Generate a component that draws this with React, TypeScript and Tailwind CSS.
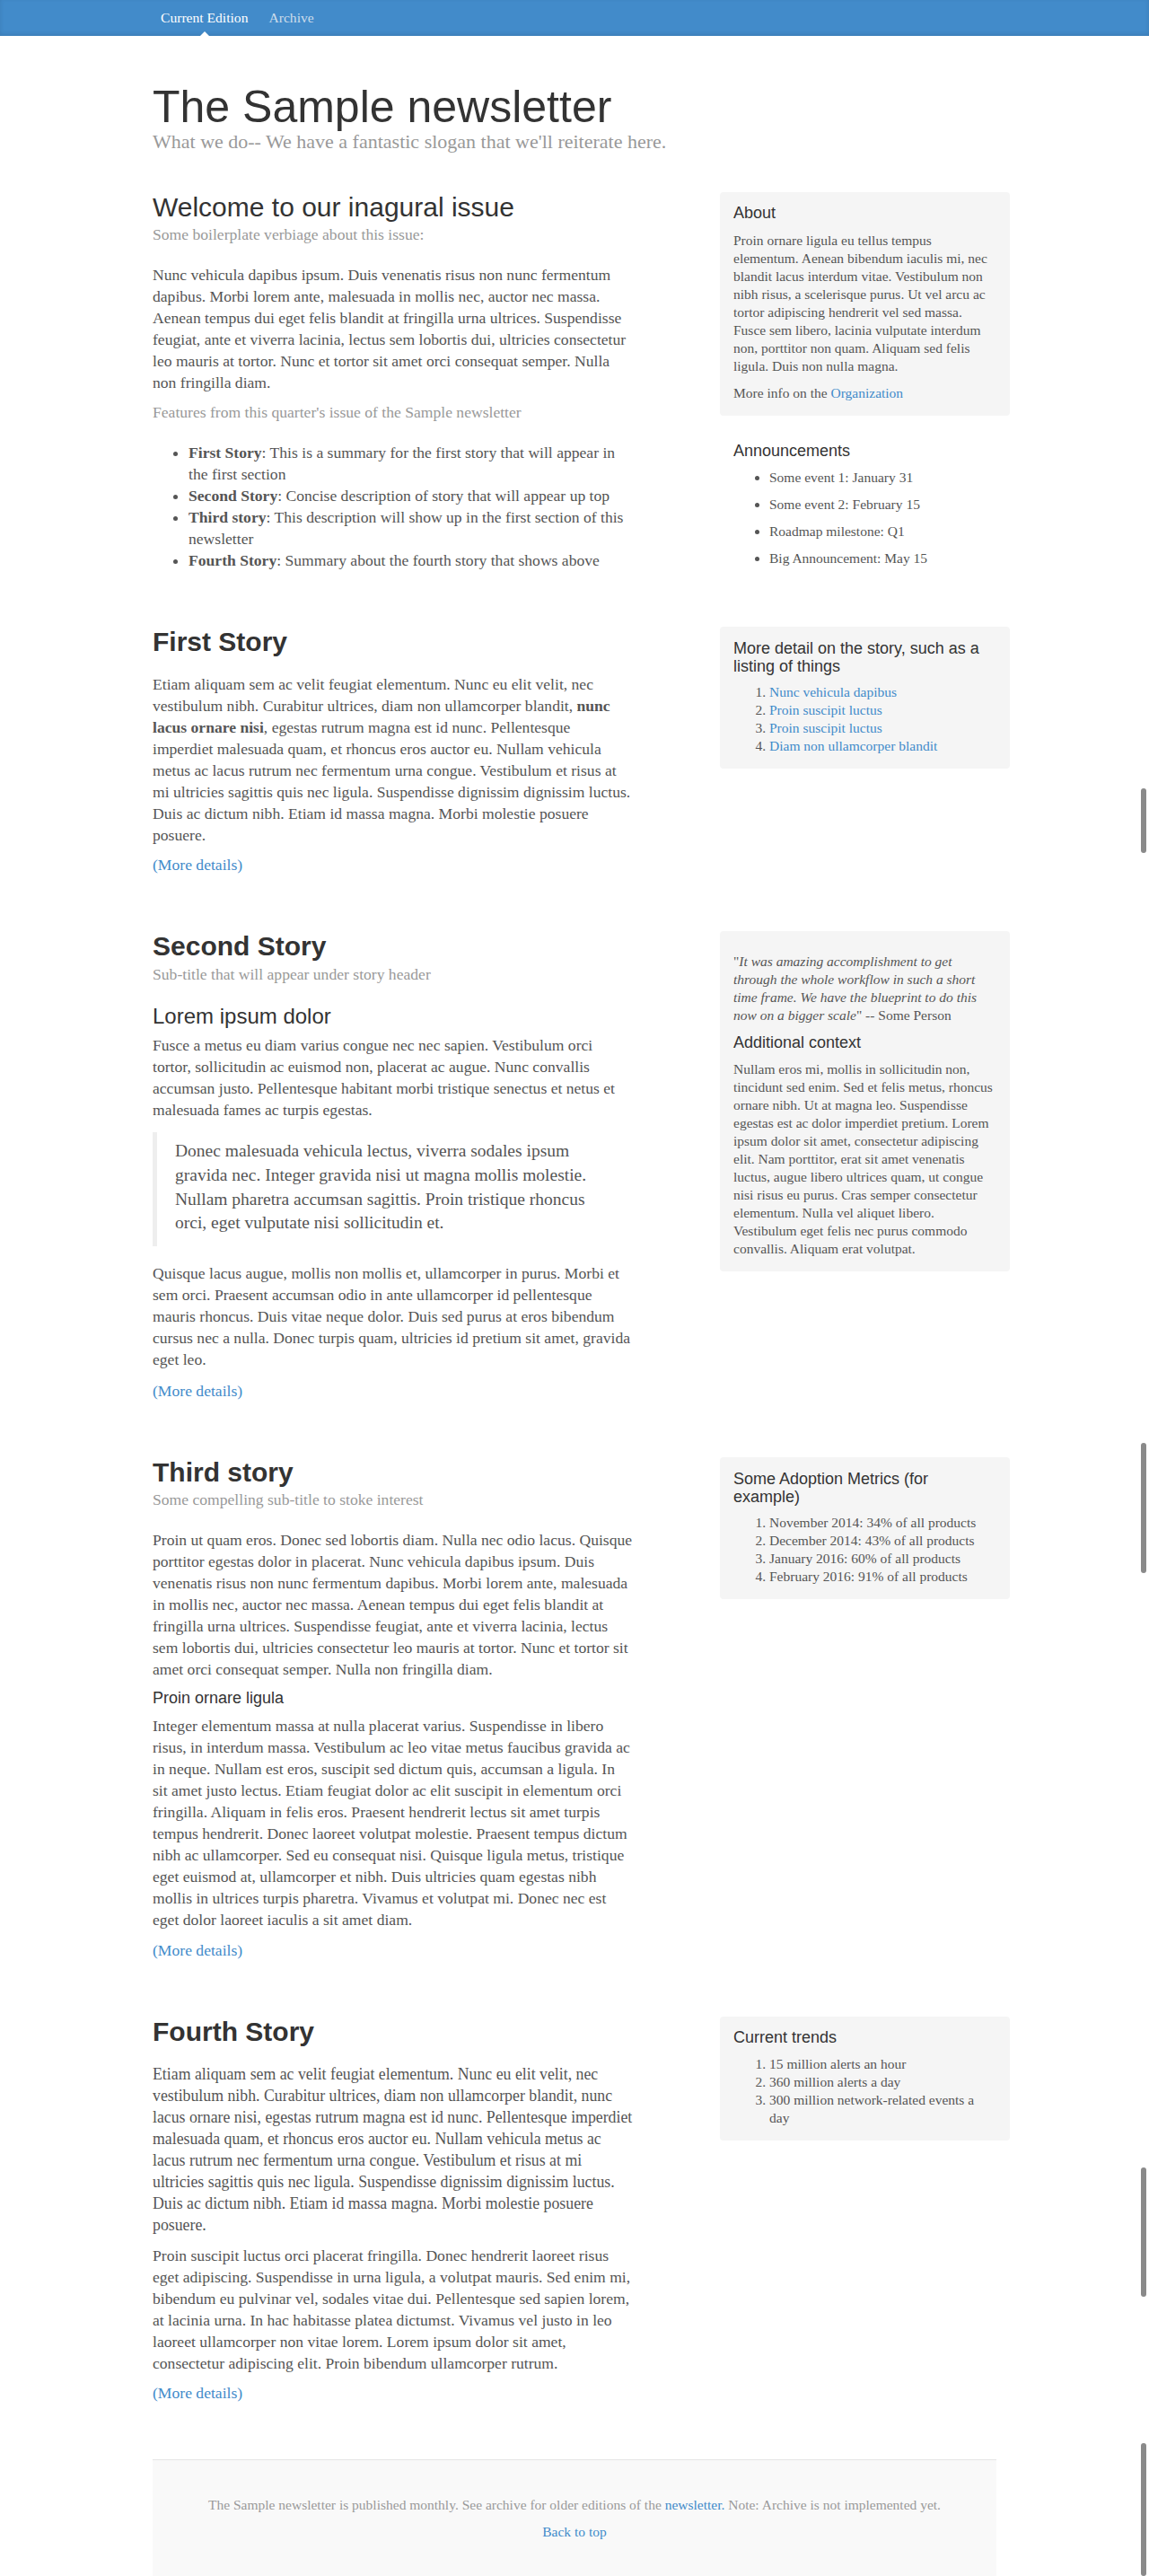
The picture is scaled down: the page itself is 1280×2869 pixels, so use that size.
import React from "react"

const sans = "font-['Liberation_Sans',Arial,sans-serif]"
const link = "text-[#428bca]"

function Row({ main, side, last }: { main: React.ReactNode; side: React.ReactNode; last?: boolean }) {
  return (
    <div className={last ? "flex" : "flex mb-[62px]"}>
      <div className="w-[536px] shrink-0">{main}</div>
      <aside className="ml-auto mr-[-15px] w-[323px] shrink-0">{side}</aside>
    </div>
  )
}

function Inset({ children, className }: { children: React.ReactNode; className?: string }) {
  return <div className={"rounded-[4px] bg-[#f5f5f5] px-[15px] pb-[15px] " + (className ?? "")}>{children}</div>
}

function SideTitle({ children, className }: { children: React.ReactNode; className?: string }) {
  return <h4 className={sans + " text-[18px] leading-[19.8px] text-[#333] " + (className ?? "")}>{children}</h4>
}

function StoryTitle({ children, className }: { children: React.ReactNode; className?: string }) {
  return <h2 className={sans + " text-[30px] leading-[33px] font-bold text-[#333] " + (className ?? "")}>{children}</h2>
}

function More({ className }: { className?: string }) {
  return (
    <p className={"leading-[24px] " + (className ?? "")}>
      <a href="#" className={link}>(More details)</a>
    </p>
  )
}

// scrollbar thumbs caught in the stitched screenshot
const thumbs = ["top-[878px] h-[72px]", "top-[1607px] h-[145px]", "top-[2414px] h-[144px]", "top-[2721px] h-[148px]"]

export default function App() {
  return (
    <div className="relative min-h-screen bg-white font-['Liberation_Serif','Times_New_Roman',serif] text-[#555]">
      {/* masthead */}
      <nav className="h-[40px] bg-[#428bca] shadow-[inset_0_-2px_5px_rgba(0,0,0,0.1)]">
        <div className="flex pl-[169px] text-[15.6px] leading-[20px]">
          <a href="#" className="relative p-[10px] text-white">
            Current Edition
            <span className="absolute bottom-0 left-1/2 ml-[-5px] h-0 w-0 border-x-[5px] border-b-[5px] border-x-transparent border-b-white" />
          </a>
          <a href="#" className="ml-[3px] p-[10px] text-[#cdddeb]">Archive</a>
        </div>
      </nav>

      <div className="mx-auto w-[940px]">
        <header className="pt-[53px]">
          <h1 className={sans + " text-[50px] leading-[52px] text-[#333]"}>The Sample newsletter</h1>
          <p className="mt-[-1px] text-[22px] leading-[28px] text-[#999]">
            What we do-- We have a fantastic slogan that we'll reiterate here.
          </p>
        </header>

        <div className="mt-[42px] text-[17.6px] leading-[24px]">
          <Row
            main={
              <>
                <h2 className={sans + " mb-[2px] text-[30px] leading-[33px] text-[#333]"}>Welcome to our inagural issue</h2>
                <p className="mb-[21px] text-[#999]">Some boilerplate verbiage about this issue:</p>
                <p className="mb-[9px]">
                  Nunc vehicula dapibus ipsum. Duis venenatis risus non nunc fermentum dapibus. Morbi lorem ante, malesuada in
                  mollis nec, auctor nec massa. Aenean tempus dui eget felis blandit at fringilla urna ultrices. Suspendisse
                  feugiat, ante et viverra lacinia, lectus sem lobortis dui, ultricies consectetur leo mauris at tortor. Nunc
                  et tortor sit amet orci consequat semper. Nulla non fringilla diam.
                </p>
                <p className="mb-[21px] text-[#999]">Features from this quarter's issue of the Sample newsletter</p>
                <ul className="list-disc pl-[40px]">
                  <li><b>First Story</b>: This is a summary for the first story that will appear in the first section</li>
                  <li><b>Second Story</b>: Concise description of story that will appear up top</li>
                  <li><b>Third story</b>: This description will show up in the first section of this newsletter</li>
                  <li><b>Fourth Story</b>: Summary about the fourth story that shows above</li>
                </ul>
              </>
            }
            side={
              <div className="text-[15.5px] leading-[20px]">
                <Inset className="pt-[14px]">
                  <SideTitle className="mb-[10px]">About</SideTitle>
                  <p className="mb-[10px]">
                    Proin ornare ligula eu tellus tempus elementum. Aenean bibendum iaculis mi, nec blandit lacus interdum
                    vitae. Vestibulum non nibh risus, a scelerisque purus. Ut vel arcu ac tortor adipiscing hendrerit vel sed
                    massa. Fusce sem libero, lacinia vulputate interdum non, porttitor non quam. Aliquam sed felis ligula.
                    Duis non nulla magna.
                  </p>
                  <p>
                    More info on the <a href="#" className={link}>Organization</a>
                  </p>
                </Inset>
                <div className="mt-[15px] px-[15px] pt-[15px]">
                  <SideTitle className="mb-[9px]">Announcements</SideTitle>
                  <ul className="flex list-disc flex-col gap-[10px] pl-[40px]">
                    <li>Some event 1: January 31</li>
                    <li>Some event 2: February 15</li>
                    <li>Roadmap milestone: Q1</li>
                    <li>Big Announcement: May 15</li>
                  </ul>
                </div>
              </div>
            }
          />

          <Row
            main={
              <>
                <StoryTitle className="mb-[19px]">First Story</StoryTitle>
                <p className="mb-[9px]">
                  Etiam aliquam sem ac velit feugiat elementum. Nunc eu elit velit, nec vestibulum nibh. Curabitur ultrices,
                  diam non ullamcorper blandit, <b>nunc lacus ornare nisi</b>, egestas rutrum magna est id nunc. Pellentesque
                  imperdiet malesuada quam, et rhoncus eros auctor eu. Nullam vehicula metus ac lacus rutrum nec fermentum
                  urna congue. Vestibulum et risus at mi ultricies sagittis quis nec ligula. Suspendisse dignissim dignissim
                  luctus. Duis ac dictum nibh. Etiam id massa magna. Morbi molestie posuere posuere.
                </p>
                <More />
              </>
            }
            side={
              <Inset className="pt-[15px] text-[15.5px] leading-[20px]">
                <SideTitle className="mb-[8px]">More detail on the story, such as a listing of things</SideTitle>
                <ol className="list-decimal pl-[40px]">
                  <li><a href="#" className={link}>Nunc vehicula dapibus</a></li>
                  <li><a href="#" className={link}>Proin suscipit luctus</a></li>
                  <li><a href="#" className={link}>Proin suscipit luctus</a></li>
                  <li><a href="#" className={link}>Diam non ullamcorper blandit</a></li>
                </ol>
              </Inset>
            }
          />

          <Row
            main={
              <>
                <StoryTitle className="mb-[3px]">Second Story</StoryTitle>
                <p className="mb-[22px] text-[#999]">Sub-title that will appear under story header</p>
                <h3 className={sans + " mb-[6.6px] text-[24px] leading-[26.4px] text-[#333]"}>Lorem ipsum dolor</h3>
                <p className="mb-[13px]">
                  Fusce a metus eu diam varius congue nec nec sapien. Vestibulum orci tortor, sollicitudin ac euismod non,
                  placerat ac augue. Nunc convallis accumsan justo. Pellentesque habitant morbi tristique senectus et netus et
                  malesuada fames ac turpis egestas.
                </p>
                <blockquote className="mb-[18px] border-l-[5px] border-[#eee] px-[20px] pt-[8px] pb-[12px] text-[19.5px] leading-[26.8px]">
                  <p>
                    Donec malesuada vehicula lectus, viverra sodales ipsum gravida nec. Integer gravida nisi ut magna mollis
                    molestie. Nullam pharetra accumsan sagittis. Proin tristique rhoncus orci, eget vulputate nisi
                    sollicitudin et.
                  </p>
                </blockquote>
                <p className="mb-[11px]">
                  Quisque lacus augue, mollis non mollis et, ullamcorper in purus. Morbi et sem orci. Praesent accumsan odio in
                  ante ullamcorper id pellentesque mauris rhoncus. Duis vitae neque dolor. Duis sed purus at eros bibendum
                  cursus nec a nulla. Donec turpis quam, ultricies id pretium sit amet, gravida eget leo.
                </p>
                <More />
              </>
            }
            side={
              <Inset className="pt-[24px] text-[15.5px] leading-[20px]">
                <p className="mb-[11px]">
                  "<i>It was amazing accomplishment to get through the whole workflow in such a short time frame. We have the
                  blueprint to do this now on a bigger scale</i>" -- Some Person
                </p>
                <SideTitle className="mb-[9px]">Additional context</SideTitle>
                <p>
                  Nullam eros mi, mollis in sollicitudin non, tincidunt sed enim. Sed et felis metus, rhoncus ornare nibh. Ut
                  at magna leo. Suspendisse egestas est ac dolor imperdiet pretium. Lorem ipsum dolor sit amet, consectetur
                  adipiscing elit. Nam porttitor, erat sit amet venenatis luctus, augue libero ultrices quam, ut congue nisi
                  risus eu purus. Cras semper consectetur elementum. Nulla vel aliquet libero. Vestibulum eget felis nec purus
                  commodo convallis. Aliquam erat volutpat.
                </p>
              </Inset>
            }
          />

          <Row
            main={
              <>
                <StoryTitle className="mb-[2px]">Third story</StoryTitle>
                <p className="mb-[21px] text-[#999]">Some compelling sub-title to stoke interest</p>
                <p className="mb-[11px]">
                  Proin ut quam eros. Donec sed lobortis diam. Nulla nec odio lacus. Quisque porttitor egestas dolor in
                  placerat. Nunc vehicula dapibus ipsum. Duis venenatis risus non nunc fermentum dapibus. Morbi lorem ante,
                  malesuada in mollis nec, auctor nec massa. Aenean tempus dui eget felis blandit at fringilla urna ultrices.
                  Suspendisse feugiat, ante et viverra lacinia, lectus sem lobortis dui, ultricies consectetur leo mauris at
                  tortor. Nunc et tortor sit amet orci consequat semper. Nulla non fringilla diam.
                </p>
                <h4 className={sans + " mb-[8px] text-[18px] leading-[19.8px] text-[#333]"}>Proin ornare ligula</h4>
                <p className="mb-[10px]">
                  Integer elementum massa at nulla placerat varius. Suspendisse in libero risus, in interdum massa. Vestibulum
                  ac leo vitae metus faucibus gravida ac in neque. Nullam est eros, suscipit sed dictum quis, accumsan a
                  ligula. In sit amet justo lectus. Etiam feugiat dolor ac elit suscipit in elementum orci fringilla. Aliquam
                  in felis eros. Praesent hendrerit lectus sit amet turpis tempus hendrerit. Donec laoreet volutpat molestie.
                  Praesent tempus dictum nibh ac ullamcorper. Sed eu consequat nisi. Quisque ligula metus, tristique eget
                  euismod at, ullamcorper et nibh. Duis ultricies quam egestas nibh mollis in ultrices turpis pharetra.
                  Vivamus et volutpat mi. Donec nec est eget dolor laoreet iaculis a sit amet diam.
                </p>
                <More />
              </>
            }
            side={
              <Inset className="pt-[15px] text-[15.5px] leading-[20px]">
                <SideTitle className="mb-[8.4px]">Some Adoption Metrics (for example)</SideTitle>
                <ol className="list-decimal pl-[40px]">
                  <li>November 2014: 34% of all products</li>
                  <li>December 2014: 43% of all products</li>
                  <li>January 2016: 60% of all products</li>
                  <li>February 2016: 91% of all products</li>
                </ol>
              </Inset>
            }
          />

          <Row
            last
            main={
              <>
                <StoryTitle className="mb-[19px]">Fourth Story</StoryTitle>
                <p className="mb-[10px] text-[17.8px]">
                  Etiam aliquam sem ac velit feugiat elementum. Nunc eu elit velit, nec vestibulum nibh. Curabitur ultrices,
                  diam non ullamcorper blandit, nunc lacus ornare nisi, egestas rutrum magna est id nunc. Pellentesque
                  imperdiet malesuada quam, et rhoncus eros auctor eu. Nullam vehicula metus ac lacus rutrum nec fermentum
                  urna congue. Vestibulum et risus at mi ultricies sagittis quis nec ligula. Suspendisse dignissim dignissim
                  luctus. Duis ac dictum nibh. Etiam id massa magna. Morbi molestie posuere posuere.
                </p>
                <p className="mb-[9px]">
                  Proin suscipit luctus orci placerat fringilla. Donec hendrerit laoreet risus eget adipiscing. Suspendisse in
                  urna ligula, a volutpat mauris. Sed enim mi, bibendum eu pulvinar vel, sodales vitae dui. Pellentesque sed
                  sapien lorem, at lacinia urna. In hac habitasse platea dictumst. Vivamus vel justo in leo laoreet
                  ullamcorper non vitae lorem. Lorem ipsum dolor sit amet, consectetur adipiscing elit. Proin bibendum
                  ullamcorper rutrum.
                </p>
                <More />
              </>
            }
            side={
              <Inset className="pt-[14px] text-[15.5px] leading-[20px]">
                <SideTitle className="mb-[9px]">Current trends</SideTitle>
                <ol className="list-decimal pl-[40px]">
                  <li>15 million alerts an hour</li>
                  <li>360 million alerts a day</li>
                  <li>300 million network-related events a day</li>
                </ol>
              </Inset>
            }
          />
        </div>

        <footer className="mt-[62px] border-t border-[#e5e5e5] bg-[#f9f9f9] py-[40px] text-center text-[15.5px] leading-[20px] text-[#999]">
          <p className="mb-[10px]">
            The Sample newsletter is published monthly. See archive for older editions of the{" "}
            <a href="#" className={link}>newsletter.</a> Note: Archive is not implemented yet.
          </p>
          <p>
            <a href="#" className={link}>Back to top</a>
          </p>
        </footer>
      </div>

      {thumbs.map((t) => (
        <div key={t} className={"absolute right-[3px] w-[6px] rounded-full bg-[#8a8a8a] " + t} />
      ))}
    </div>
  )
}
